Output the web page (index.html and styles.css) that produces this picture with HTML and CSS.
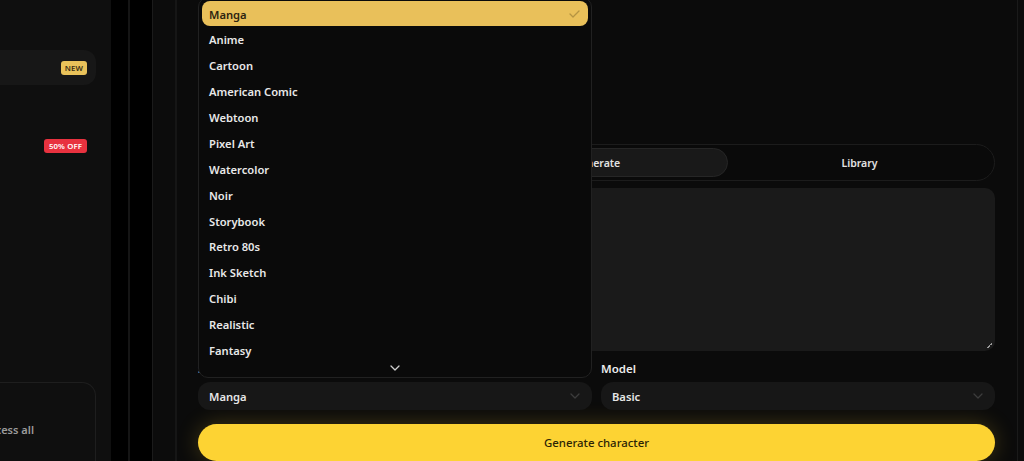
FILE: index.html
```html
<!DOCTYPE html>
<html lang="en">
<head>
<meta charset="utf-8">
<title>Character Studio</title>
<link rel="stylesheet" href="styles.css">
</head>
<body>
<div class="app">
  <aside class="sidebar">
    <div class="sidebar-inner">
      <div class="nav-item is-active"><span class="badge badge-new">NEW</span></div>
      <div class="nav-item"><span class="badge badge-sale">50% OFF</span></div>
      <div class="nav-spacer"></div>
      <div class="promo">
        <p class="promo-text">Upgrade to access all</p>
      </div>
    </div>
  </aside>

  <div class="rail"></div>
  <div class="rail rail-line"></div>

  <main class="panel">
    <section class="card">
      <div class="card-head"></div>

      <div class="tabs">
        <button class="tab">Describe</button>
        <button class="tab is-active">Generate</button>
        <button class="tab">Library</button>
      </div>

      <div class="prompt"></div>

      <div class="fields">
        <div class="field">
          <label class="field-label">Style</label>
          <div class="select select-open">
            <span class="select-value">Manga</span>
            <svg class="chev" width="10" height="6" viewBox="0 0 10 6"><path d="M1 1l4 4 4-4" fill="none" stroke="currentColor" stroke-width="1.3" stroke-linecap="round" stroke-linejoin="round"/></svg>

            <div class="menu">
              <ul class="menu-list">
                <li class="menu-item is-selected">Manga
                  <svg class="check" width="11" height="8" viewBox="0 0 11 8"><path d="M1 4l3 3 6-6" fill="none" stroke="currentColor" stroke-width="1.3" stroke-linecap="round" stroke-linejoin="round"/></svg>
                </li>
                <li class="menu-item">Anime</li>
                <li class="menu-item">Cartoon</li>
                <li class="menu-item">American Comic</li>
                <li class="menu-item">Webtoon</li>
                <li class="menu-item">Pixel Art</li>
                <li class="menu-item">Watercolor</li>
                <li class="menu-item">Noir</li>
                <li class="menu-item">Storybook</li>
                <li class="menu-item">Retro 80s</li>
                <li class="menu-item">Ink Sketch</li>
                <li class="menu-item">Chibi</li>
                <li class="menu-item">Realistic</li>
                <li class="menu-item">Fantasy</li>
              </ul>
              <div class="menu-more">
                <svg width="10" height="6" viewBox="0 0 10 6"><path d="M1 1l4 4 4-4" fill="none" stroke="currentColor" stroke-width="1.3" stroke-linecap="round" stroke-linejoin="round"/></svg>
              </div>
            </div>
          </div>
        </div>
        <div class="field">
          <label class="field-label">Model</label>
          <div class="select">
            <span class="select-value">Basic</span>
            <svg class="chev" width="10" height="6" viewBox="0 0 10 6"><path d="M1 1l4 4 4-4" fill="none" stroke="currentColor" stroke-width="1.3" stroke-linecap="round" stroke-linejoin="round"/></svg>
          </div>
        </div>
      </div>

      <button class="cta">Generate character</button>
    </section>
  </main>
</div>
</body>
</html>
```

FILE: styles.css
```css
* { box-sizing: border-box; }

html, body {
  margin: 0;
  height: 100%;
  background: #000;
  font-family: "Noto Sans", "Open Sans", sans-serif;
  color: #ececec;
  overflow: hidden;
}

.app {
  display: flex;
  height: 461px;
  width: 1024px;
  overflow: hidden;
}

/* ---------- sidebar ---------- */
.sidebar {
  flex: 0 0 111px;
  background: #0f0f0f;
  overflow: hidden;
  padding: 50px 15px 0 0;
}

.sidebar-inner {
  margin-left: -160px;
  display: flex;
  flex-direction: column;
  height: 100%;
  gap: 43px;
}

.nav-item {
  display: flex;
  align-items: center;
  justify-content: flex-end;
  height: 35px;
  padding: 0 9px 0 16px;
  border-radius: 12px;
}

.nav-item.is-active { background: #171717; }

.badge {
  display: inline-flex;
  align-items: center;
  height: 14px;
  padding: 0 4px;
  border-radius: 3px;
  font-size: 7.8px;
  font-weight: 600;
  letter-spacing: 0.1px;
}

.badge-new { background: #e9c25a; color: #3b2f12; }
.badge-sale { background: #e8323f; color: #fff; padding: 0 5px; }

.nav-spacer { flex: 0 0 133px; }

.promo {
  flex: 1;
  border: 1px solid #1e1e1e;
  border-bottom: 0;
  border-radius: 14px 14px 0 0;
  background: #0f0f0f;
  padding: 39px 61px 0 16px;
  text-align: right;
  white-space: nowrap;
}

.promo-text {
  margin: 0;
  font-size: 11px;
  font-weight: 600;
  color: #9b9b9b;
}

/* ---------- gutters ---------- */
.rail {
  flex: 0 0 17px;
  background: #000;
}

.rail-line {
  flex-basis: 24px;
  border-left: 2px solid #151515;
}

/* ---------- main panel ---------- */
.panel {
  flex: 0 0 888px;
  background: #0c0c0c;
  border-left: 1px solid #1b1b1b;
  padding: 0 22px;
}

.card {
  height: 100%;
  background: #0b0b0b;
  border-left: 2px solid #161616;
  border-right: 1px solid #1a1a1a;
  padding: 0 22px 0 21px;
  display: flex;
  flex-direction: column;
}

.card-head { flex: 0 0 144px; }

/* tabs */
.tabs {
  display: grid;
  grid-template-columns: 1fr 1fr 1fr;
  height: 37px;
  padding: 3px;
  background: #0a0a0a;
  border: 1px solid #1c1c1c;
  border-radius: 19px;
}

.tab {
  font: inherit;
  font-size: 10.5px;
  font-weight: 600;
  color: #e2e2e2;
  background: transparent;
  border: 1px solid transparent;
  border-radius: 16px;
  padding: 0;
}

.tab.is-active {
  background: #191919;
  border-color: #262626;
}

/* prompt */
.prompt {
  margin-top: 7px;
  height: 163px;
  background: #1a1a1a;
  border-radius: 10px;
  position: relative;
}

.prompt::after {
  content: "";
  position: absolute;
  right: 3px;
  bottom: 3px;
  width: 5px;
  height: 5px;
  background: linear-gradient(135deg, transparent 45%, #9a9a9a 45%, #9a9a9a 60%, transparent 60%);
}

/* fields */
.fields {
  display: grid;
  grid-template-columns: 1fr 1fr;
  gap: 9px;
  margin-top: 10px;
}

.field-label {
  display: block;
  height: 16px;
  line-height: 16px;
  margin-bottom: 5px;
  font-size: 11.5px;
  font-weight: 600;
  color: #ececec;
}

.select {
  position: relative;
  display: flex;
  align-items: center;
  justify-content: space-between;
  height: 28px;
  padding: 0 12px 0 11px;
  background: #171717;
  border-radius: 12px;
}

.select-value {
  font-size: 11.2px;
  font-weight: 600;
  color: #e6e6e6;
}

.chev { color: #3c3c3c; }

/* dropdown menu */
.menu {
  position: absolute;
  z-index: 10;
  left: 0;
  right: 0;
  bottom: calc(100% + 4px);
  height: 381px;
  padding: 3px 3px 4px;
  background: #0a0a0a;
  border: 1px solid #212121;
  border-radius: 10px;
  display: flex;
  flex-direction: column;
}

.menu-list {
  list-style: none;
  margin: 0;
  padding: 0;
}

.menu-item {
  display: flex;
  align-items: center;
  justify-content: space-between;
  height: 25.9px;
  padding: 0 8px 0 7px;
  border-radius: 8px;
  font-size: 11.2px;
  font-weight: 600;
  color: #e8e8e8;
}

.menu-item.is-selected {
  height: 25px;
  margin-bottom: 0.9px;
  padding-top: 1px;
  background: #e9c05a;
  color: #2e2410;
}

.check { color: #b59442; }

.menu-more {
  flex: 1;
  display: flex;
  align-items: center;
  justify-content: center;
  color: #cfcfcf;
}

/* call to action */
.cta {
  margin-top: 14px;
  height: 37px;
  border: 0;
  border-radius: 19px;
  background: #fdd333;
  color: #2c2405;
  font: inherit;
  font-size: 11.4px;
  font-weight: 500;
  box-shadow: 0 0 22px rgba(253, 211, 51, 0.22);
}
```
